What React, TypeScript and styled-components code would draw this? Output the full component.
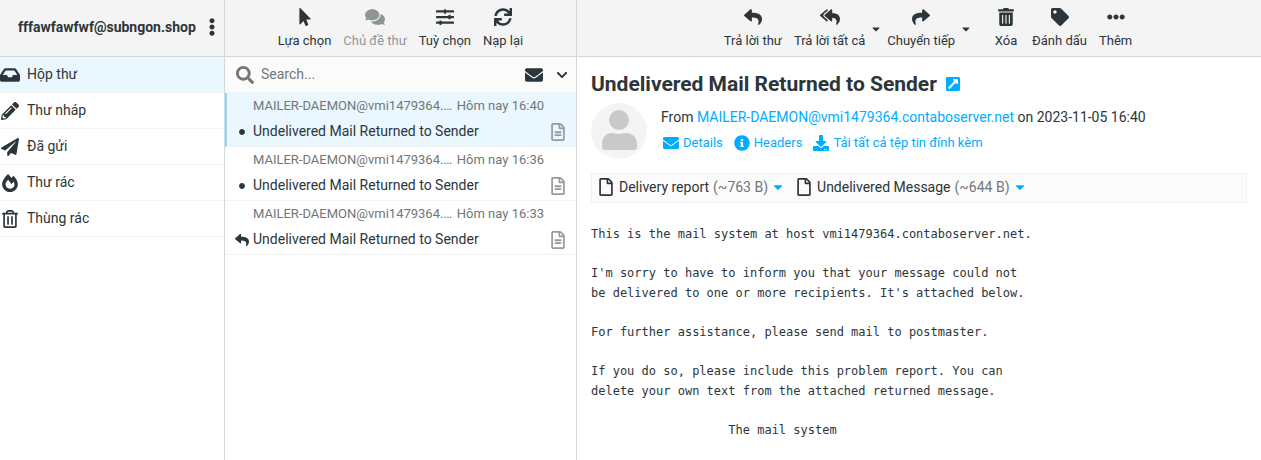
import React from "react";
import styled, { createGlobalStyle, css } from "styled-components";
import {
  FaEllipsisV, FaInbox, FaPencilAlt, FaPaperPlane, FaFireAlt, FaRegTrashAlt, FaMousePointer,
  FaComments, FaSlidersH, FaSync, FaSearch, FaEnvelope, FaChevronDown, FaRegFileAlt, FaReply,
  FaReplyAll, FaShare, FaTrashAlt, FaTag, FaEllipsisH, FaInfoCircle, FaDownload, FaRegFile,
  FaCaretDown, FaExternalLinkSquareAlt, FaCircle,
} from "react-icons/fa";

const GlobalStyle = createGlobalStyle`
  * { box-sizing: border-box; }
  body {
    margin: 0;
    background: #fff;
    color: #2c363a;
    font: 14px/21px Roboto, "Liberation Sans", sans-serif;
  }
  button, input { font: inherit; color: inherit; border: 0; background: none; padding: 0; margin: 0; }
  button { cursor: pointer; }
  a { text-decoration: none; color: inherit; }
  ul { list-style: none; margin: 0; padding: 0; }
  svg { display: block; flex: none; }
`;

const Layout = styled.div`
  display: grid;
  grid-template-columns: 225px 352px minmax(0, 1fr);
  min-height: 100vh;
`;

const Column = styled.div<{ $divided?: boolean }>`
  display: flex;
  flex-direction: column;
  min-width: 0;
  border-right: ${(p) => (p.$divided ? "1px solid #d1d9dc" : "0")};
`;

const Header = styled.header`
  display: flex;
  align-items: center;
  justify-content: center;
  height: 57px;
  padding-top: 2px;
  background: #f4f4f4;
  border-bottom: 1px solid #d1d9dc;
`;

const AccountHeader = styled(Header)`
  justify-content: space-between;
  padding: 0 3px 2px 18px;
  font-weight: 700;
`;

const MessageHeader = styled(Header)`
  padding-left: 18px;
`;

const IconButton = styled.button`
  display: flex;
  align-items: center;
  justify-content: center;
  width: 18px;
  height: 24px;
`;

const FolderLink = styled.a<{ $selected?: boolean }>`
  display: flex;
  align-items: center;
  gap: 7px;
  height: 36px;
  border-bottom: 1px solid #f1f3f4;
  background: ${(p) => (p.$selected ? "#eaf7fe" : "transparent")};
`;

const FolderIcon = styled.span`
  display: flex;
  justify-content: center;
  width: 20px;
`;

const Tool = styled.button`
  display: flex;
  flex-direction: column;
  align-items: center;
  gap: 6px;
  min-width: 40px;
  padding: 0 6px;
  font-size: 13px;
  line-height: 18px;
  white-space: nowrap;
  svg { height: 18px; }
  &:disabled { color: #2c363a; opacity: 0.5; cursor: default; }
`;

const DropTool = styled.div`
  display: flex;
  align-items: center;
`;

const DropButton = styled.button`
  display: flex;
  align-items: center;
  justify-content: center;
  width: 10px;
  height: 24px;
`;

const Spacer = styled.span`
  width: 15px;
`;

const SearchBar = styled.form`
  display: flex;
  align-items: center;
  height: 36px;
  padding: 0 5px 0 11px;
  gap: 7px;
  background: #fbfbfb;
  border-bottom: 1px solid #f1f3f4;
  color: #737677;
`;

const SearchInput = styled.input`
  flex: 1;
  min-width: 0;
  outline: 0;
  &::placeholder { color: #737677; opacity: 1; }
`;

const SearchActions = styled.div`
  display: flex;
  gap: 10px;
  color: #2c363a;
`;

const Message = styled.a<{ $selected?: boolean }>`
  display: grid;
  grid-template-columns: 22px minmax(0, 1fr) 32px;
  align-items: center;
  align-content: start;
  row-gap: 5px;
  height: 54px;
  border-bottom: 1px solid #f1f3f4;
  border-left: 2px solid transparent;
  padding: 2px 0 0 4px;
  ${(p) => p.$selected && css`
    background: #eaf7fe;
    border-left-color: #8fd7ff;
  `}
`;

const MessageMeta = styled.span`
  grid-column: 2;
  display: flex;
  justify-content: space-between;
  font-size: 13px;
  white-space: nowrap;
  color: #737677;
`;

const MessageFlag = styled.span`
  grid-column: 1;
  display: flex;
  justify-content: center;
`;

const FileMark = styled.span`
  display: flex;
  padding-left: 5px;
  color: #959a9c;
`;

const Content = styled.main`
  padding: 14px 14px 20px;
`;

const Title = styled.h1`
  display: flex;
  align-items: center;
  gap: 8px;
  margin: 0;
  font-size: 21px;
  line-height: 26px;
  font-weight: 700;
`;

const BlueLink = styled.a`
  color: #00acff;
`;

const Summary = styled.div`
  display: flex;
  gap: 14px;
  margin-top: 6px;
`;

const SummaryText = styled.div`
  display: flex;
  flex-direction: column;
  gap: 4px;
  padding-top: 4px;
`;

const SummaryLinks = styled.div`
  display: flex;
  gap: 11px;
  font-size: 13px;
  padding-left: 2px;
`;

const ActionLink = styled(BlueLink)`
  display: flex;
  align-items: center;
  gap: 4px;
`;

const Attachments = styled.ul`
  display: flex;
  gap: 9px;
  height: 30px;
  margin-top: 14px;
  padding: 0 7px 2px;
  border: 1px solid #f1f3f4;
  background: #fbfbfb;
`;

const Attachment = styled.li`
  display: flex;
  align-items: center;
`;

const AttachmentLink = styled.a`
  display: flex;
  align-items: center;
  gap: 4px;
  svg { width: 14px; margin-right: 2px; }
`;

const Size = styled.span`
  color: #737677;
`;

const BlueDrop = styled(IconButton)`
  width: 20px;
  color: #00acff;
`;

const Body = styled.div`
  margin-top: 21px;
  font: 12px/20px "DejaVu Sans Mono", "Liberation Mono", monospace;
  p { margin: 0 0 19px; white-space: pre-wrap; }
`;

const folders = [
  { name: "Hộp thư", icon: <FaInbox size={20} /> },
  { name: "Thư nháp", icon: <FaPencilAlt size={18} /> },
  { name: "Đã gửi", icon: <FaPaperPlane size={18} /> },
  { name: "Thư rác", icon: <FaFireAlt size={18} /> },
  { name: "Thùng rác", icon: <FaRegTrashAlt size={18} /> },
];

const messages = [
  { time: "16:40", replied: false },
  { time: "16:36", replied: false },
  { time: "16:33", replied: true },
];

const paragraphs = [
  "This is the mail system at host vmi1479364.contaboserver.net.",
  "I'm sorry to have to inform you that your message could not\nbe delivered to one or more recipients. It's attached below.",
  "For further assistance, please send mail to postmaster.",
  "If you do so, please include this problem report. You can\ndelete your own text from the attached returned message.",
  "                   The mail system",
];

const Avatar = () => (
  <svg width="56" height="56" viewBox="0 0 56 56" aria-hidden="true">
    <circle cx="28" cy="28" r="28" fill="#f4f4f4" />
    <circle cx="28" cy="17" r="10" fill="#c9c9c9" />
    <path fill="#c9c9c9" d="M11 44v-3c0-7 4-11 10-11 3 0 4 1 7 1s4-1 7-1c6 0 11 4 11 11v3c0 2-1 3-3 3H14c-2 0-3-1-3-3z" />
  </svg>
);

export default function App() {
  return (
    <>
      <GlobalStyle />
      <Layout>
        <Column as="nav" $divided>
          <AccountHeader>
            <span>fffawfawfwf@subngon.shop</span>
            <IconButton aria-label="Menu"><FaEllipsisV size={18} /></IconButton>
          </AccountHeader>
          <ul>
            {folders.map((f, i) => (
              <li key={f.name}>
                <FolderLink href="#" $selected={i === 0}>
                  <FolderIcon>{f.icon}</FolderIcon>
                  {f.name}
                </FolderLink>
              </li>
            ))}
          </ul>
        </Column>

        <Column as="section" $divided>
          <Header>
            <Tool><FaMousePointer size={18} />Lựa chọn</Tool>
            <Tool disabled><FaComments size={20} />Chủ đề thư</Tool>
            <Tool><FaSlidersH size={18} />Tuỳ chọn</Tool>
            <Tool><FaSync size={18} />Nạp lại</Tool>
          </Header>
          <SearchBar>
            <FaSearch size={18} />
            <SearchInput type="text" placeholder="Search..." aria-label="Search" />
            <SearchActions>
              <IconButton type="button" aria-label="Unread"><FaEnvelope size={18} /></IconButton>
              <IconButton type="button" aria-label="Options"><FaChevronDown size={12} /></IconButton>
            </SearchActions>
          </SearchBar>
          <ul>
            {messages.map((m, i) => (
              <li key={m.time}>
                <Message href="#" $selected={i === 0}>
                  <MessageMeta>
                    <span>MAILER-DAEMON@vmi1479364.…</span>
                    <span>Hôm nay {m.time}</span>
                  </MessageMeta>
                  <MessageFlag>{m.replied ? <FaReply size={14} /> : <FaCircle size={6} />}</MessageFlag>
                  <span>Undelivered Mail Returned to Sender</span>
                  <FileMark><FaRegFileAlt size={18} /></FileMark>
                </Message>
              </li>
            ))}
          </ul>
        </Column>

        <Column as="section">
          <MessageHeader>
            <Tool><FaReply size={18} />Trả lời thư</Tool>
            <DropTool>
              <Tool><FaReplyAll size={20} />Trả lời tất cả</Tool>
              <DropButton aria-label="Trả lời tất cả"><FaCaretDown size={12} /></DropButton>
            </DropTool>
            <DropTool>
              <Tool><FaShare size={18} />Chuyển tiếp</Tool>
              <DropButton aria-label="Chuyển tiếp"><FaCaretDown size={12} /></DropButton>
            </DropTool>
            <Spacer />
            <Tool><FaTrashAlt size={18} />Xóa</Tool>
            <Tool><FaTag size={18} />Đánh dấu</Tool>
            <Tool><FaEllipsisH size={18} />Thêm</Tool>
          </MessageHeader>
          <Content>
            <Title>
              Undelivered Mail Returned to Sender
              <BlueLink href="#" aria-label="Open"><FaExternalLinkSquareAlt size={16} /></BlueLink>
            </Title>
            <Summary>
              <Avatar />
              <SummaryText>
                <span>
                  From <BlueLink href="#">MAILER-DAEMON@vmi1479364.contaboserver.net</BlueLink> on 2023-11-05 16:40
                </span>
                <SummaryLinks>
                  <ActionLink href="#"><FaEnvelope size={16} />Details</ActionLink>
                  <ActionLink href="#"><FaInfoCircle size={16} />Headers</ActionLink>
                  <ActionLink href="#"><FaDownload size={16} />Tải tất cả tệp tin đính kèm</ActionLink>
                </SummaryLinks>
              </SummaryText>
            </Summary>
            <Attachments>
              <Attachment>
                <AttachmentLink href="#"><FaRegFile size={18} />Delivery report <Size>(~763 B)</Size></AttachmentLink>
                <BlueDrop aria-label="Delivery report"><FaCaretDown size={14} /></BlueDrop>
              </Attachment>
              <Attachment>
                <AttachmentLink href="#"><FaRegFile size={18} />Undelivered Message <Size>(~644 B)</Size></AttachmentLink>
                <BlueDrop aria-label="Undelivered Message"><FaCaretDown size={14} /></BlueDrop>
              </Attachment>
            </Attachments>
            <Body>
              {paragraphs.map((p) => <p key={p}>{p}</p>)}
            </Body>
          </Content>
        </Column>
      </Layout>
    </>
  );
}
